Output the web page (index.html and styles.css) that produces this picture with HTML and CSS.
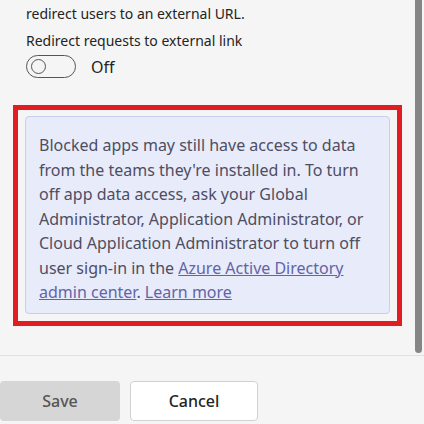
FILE: index.html
```html
<!DOCTYPE html>
<html lang="en">
<head>
<meta charset="utf-8">
<link rel="stylesheet" href="styles.css">
</head>
<body>
<div class="panel">
  <div class="content">
    <div class="settings">
      <p class="desc">redirect users to an external URL.</p>
      <p class="label">Redirect requests to external link</p>
      <div class="toggle-row">
        <span class="toggle"><span class="knob"></span></span>
        <span class="toggle-text">Off</span>
      </div>
    </div>
    <div class="highlight">
      <div class="info">
        Blocked apps may still have access to data<br>
        from the teams they're installed in. To turn<br>
        off app data access, ask your Global<br>
        Administrator, Application Administrator, or<br>
        Cloud Application Administrator to turn off<br>
        user sign-in in the <a href="#">Azure Active Directory<br>admin center</a>. <a href="#">Learn more</a>
      </div>
    </div>
  </div>
  <div class="scrollbar"><div class="thumb"></div></div>
</div>
<div class="footer">
  <button class="btn btn-save">Save</button>
  <button class="btn btn-cancel">Cancel</button>
</div>
</body>
</html>
```
FILE: styles.css
```css
html, body {
  margin: 0;
  padding: 0;
  background: #f5f5f5;
  font-family: "Noto Sans", "Open Sans", sans-serif;
  color: #242424;
}
.panel {
  height: 355px;
  display: flex;
  overflow: hidden;
  border-bottom: 1px solid #e0e0e0;
}
.content {
  flex: 1;
  padding: 0 13px;
}
.settings {
  padding-left: 13px;
}
.desc, .label {
  margin: 0;
  font-size: 14px;
  line-height: 20px;
  color: #242424;
}
.desc {
  margin-top: 4px;
}
.label {
  margin-top: 7px;
}
.toggle-row {
  display: flex;
  align-items: center;
  gap: 15px;
  margin-top: 4px;
  height: 23px;
}
.toggle {
  box-sizing: border-box;
  width: 50px;
  height: 23px;
  border: 1px solid #555555;
  border-radius: 12px;
  display: flex;
  align-items: center;
  padding-left: 4px;
}
.knob {
  box-sizing: border-box;
  width: 15px;
  height: 15px;
  border: 1px solid #555555;
  border-radius: 50%;
}
.toggle-text {
  font-size: 16px;
  color: #242424;
}
.highlight {
  margin-top: 27px;
  border: 5px solid #e31b23;
  padding: 6px 7px 7px 7px;
}
.info {
  background: #e8ebfa;
  border: 1px solid #c8cdf4;
  border-radius: 4px;
  padding: 16px 8px 8px 13px;
  font-size: 16px;
  line-height: 24.5px;
  color: #4e4e62;
  white-space: nowrap;
}
.info a {
  color: #6264a7;
  text-decoration: underline;
}
.scrollbar {
  width: 9px;
  display: flex;
}
.thumb {
  width: 7px;
  height: 353px;
  background: #858585;
  border-radius: 0 0 4px 4px;
}
.footer {
  display: flex;
  gap: 10px;
  padding-top: 25px;
}
.btn {
  height: 40px;
  border-radius: 4px;
  font-family: "Noto Sans", "Open Sans", sans-serif;
  font-size: 16px;
  font-weight: 500;
  cursor: pointer;
}
.btn-save {
  width: 120px;
  background: #d6d6d6;
  border: none;
  color: #555555;
}
.btn-cancel {
  width: 128px;
  background: #ffffff;
  border: 1px solid #d1d1d1;
  color: #242424;
}
```
